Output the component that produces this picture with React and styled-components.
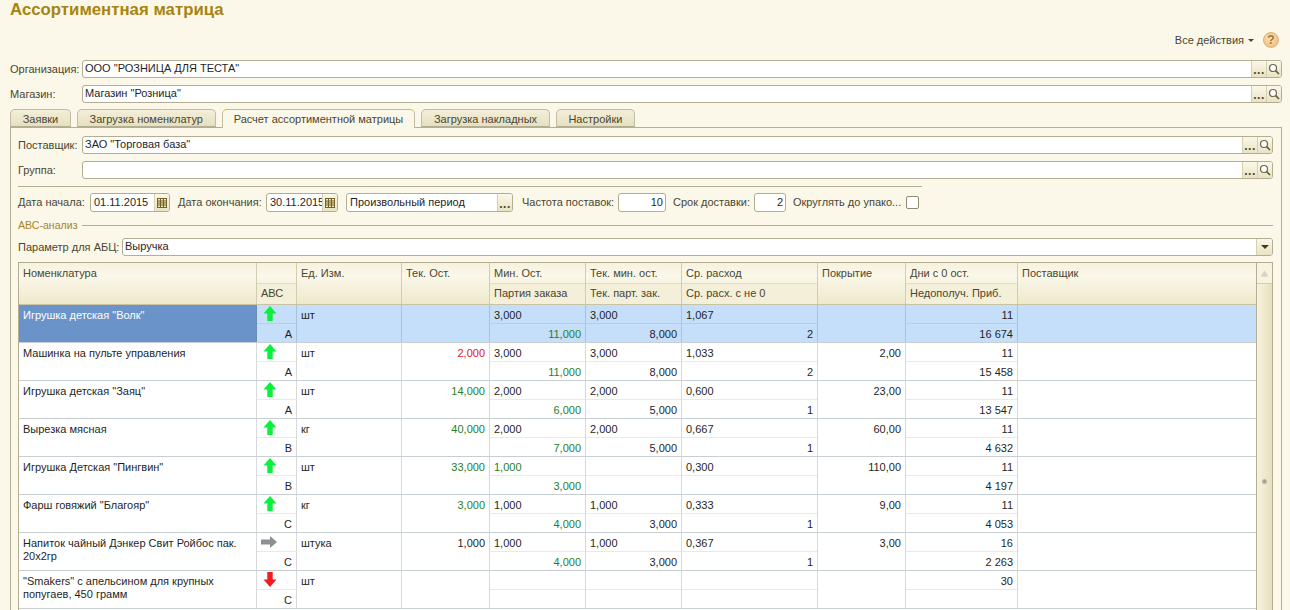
import React from 'react'
import styled, { createGlobalStyle } from 'styled-components'

const columns = '238px 40px 105px 88px 96px 96px 136px 88px 112px 1fr'

const rows = [
  { name: 'Игрушка детская "Волк"', trend: 'up', abc: 'A', unit: 'шт', stock: '', min: '3,000', batch: '11,000', curMin: '3,000', curBatch: '8,000', avg: '1,067', avgNz: '2', cover: '', days: '11', lost: '16 674', selected: true },
  { name: 'Машинка на пульте управления', trend: 'up', abc: 'A', unit: 'шт', stock: '2,000', stockTone: 'red', min: '3,000', batch: '11,000', curMin: '3,000', curBatch: '8,000', avg: '1,033', avgNz: '2', cover: '2,00', days: '11', lost: '15 458' },
  { name: 'Игрушка детская "Заяц"', trend: 'up', abc: 'A', unit: 'шт', stock: '14,000', stockTone: 'green', min: '2,000', batch: '6,000', curMin: '2,000', curBatch: '5,000', avg: '0,600', avgNz: '1', cover: '23,00', days: '11', lost: '13 547' },
  { name: 'Вырезка мясная', trend: 'up', abc: 'B', unit: 'кг', stock: '40,000', stockTone: 'green', min: '2,000', batch: '7,000', curMin: '2,000', curBatch: '5,000', avg: '0,667', avgNz: '1', cover: '60,00', days: '11', lost: '4 632' },
  { name: 'Игрушка Детская "Пингвин"', trend: 'up', abc: 'B', unit: 'шт', stock: '33,000', stockTone: 'green', min: '1,000', minTone: 'green', batch: '3,000', curMin: '', curBatch: '', avg: '0,300', avgNz: '', cover: '110,00', days: '11', lost: '4 197' },
  { name: 'Фарш говяжий "Благояр"', trend: 'up', abc: 'C', unit: 'кг', stock: '3,000', stockTone: 'green', min: '1,000', batch: '4,000', curMin: '1,000', curBatch: '3,000', avg: '0,333', avgNz: '1', cover: '9,00', days: '11', lost: '4 053' },
  { name: 'Напиток чайный Дэнкер Свит Ройбос пак. 20х2гр', trend: 'flat', abc: 'C', unit: 'штука', stock: '1,000', min: '1,000', batch: '4,000', curMin: '1,000', curBatch: '3,000', avg: '0,367', avgNz: '1', cover: '3,00', days: '16', lost: '2 263' },
  { name: '"Smakers" с апельсином для крупных попугаев, 450 грамм', trend: 'down', abc: 'C', unit: 'шт', stock: '', min: '', batch: '', curMin: '', curBatch: '', avg: '', avgNz: '', cover: '', days: '30', lost: '' },
]

const toneColor = { red: '#e0181c', green: '#1f8028' }

export default function App() {
  return (
    <Page>
      <GlobalStyle />
      <Title>Ассортиментная матрица</Title>
      <Actions>
        <span>Все действия</span>
        <Caret />
        <HelpButton>?</HelpButton>
      </Actions>

      <FormRow>
        <Label $w={72}>Организация:</Label>
        <RefField value='ООО "РОЗНИЦА ДЛЯ ТЕСТА"' />
      </FormRow>
      <FormRow>
        <Label $w={72}>Магазин:</Label>
        <RefField value='Магазин "Розница"' />
      </FormRow>

      <Tabs>
        <Tab>Заявки</Tab>
        <Tab>Загрузка номенклатур</Tab>
        <Tab $active>Расчет ассортиментной матрицы</Tab>
        <Tab>Загрузка накладных</Tab>
        <Tab>Настройки</Tab>
      </Tabs>

      <Panel>
        <FormRow $inner>
          <Label $w={64}>Поставщик:</Label>
          <RefField value='ЗАО "Торговая база"' />
        </FormRow>
        <FormRow $inner>
          <Label $w={64}>Группа:</Label>
          <RefField value='' />
        </FormRow>
        <Divider />
        <FilterRow>
          <Label $w={72}>Дата начала:</Label>
          <DateField value='01.11.2015' width={80} />
          <Label $w={88} $ml={8}>Дата окончания:</Label>
          <DateField value='30.11.2015' width={72} />
          <DateBox $w={167} $ml={8}>
            <DateInput>Произвольный период</DateInput>
            <SideButton>...</SideButton>
          </DateBox>
          <Label $w={96} $ml={9}>Частота поставок:</Label>
          <NumberField $w={48}>10</NumberField>
          <Label $w={81} $ml={7}>Срок доставки:</Label>
          <NumberField $w={32}>2</NumberField>
          <Label $w={113} $ml={7}>Округлять до упако...</Label>
          <CheckBox />
        </FilterRow>
        <GroupTitle>
          <span>АВС-анализ</span>
          <GroupLine />
        </GroupTitle>
        <FormRow $inner $tight>
          <Label $w={104}>Параметр для АБЦ:</Label>
          <Field>
            <Input>Выручка</Input>
            <DropButton><DropCaret /></DropButton>
          </Field>
        </FormRow>

        <TableFrame>
          <TableBody>
            <HeadRow>
              <HeadCell>Номенклатура</HeadCell>
              <HeadStack><HeadTop /><HeadBottom>АВС</HeadBottom></HeadStack>
              <HeadCell>Ед. Изм.</HeadCell>
              <HeadCell>Тек. Ост.</HeadCell>
              <HeadStack><HeadTop>Мин. Ост.</HeadTop><HeadBottom>Партия заказа</HeadBottom></HeadStack>
              <HeadStack><HeadTop>Тек. мин. ост.</HeadTop><HeadBottom>Тек. парт. зак.</HeadBottom></HeadStack>
              <HeadStack><HeadTop>Ср. расход</HeadTop><HeadBottom>Ср. расх. с не 0</HeadBottom></HeadStack>
              <HeadCell>Покрытие</HeadCell>
              <HeadStack><HeadTop>Дни с 0 ост.</HeadTop><HeadBottom>Недополуч. Приб.</HeadBottom></HeadStack>
              <HeadCell>Поставщик</HeadCell>
            </HeadRow>
            {rows.map((row) => (
              <DataRow key={row.name} $selected={row.selected}>
                <NameCell $selected={row.selected}>{row.name}</NameCell>
                <Stack>
                  <Sub $selected={row.selected}><TrendArrow trend={row.trend} /></Sub>
                  <Sub $right>{row.abc}</Sub>
                </Stack>
                <Cell>{row.unit}</Cell>
                <Cell $right $tone={row.stockTone}>{row.stock}</Cell>
                <Stack>
                  <Sub $selected={row.selected} $tone={row.minTone}>{row.min}</Sub>
                  <Sub $right $tone='green'>{row.batch}</Sub>
                </Stack>
                <Stack>
                  <Sub $selected={row.selected}>{row.curMin}</Sub>
                  <Sub $right>{row.curBatch}</Sub>
                </Stack>
                <Stack>
                  <Sub $selected={row.selected}>{row.avg}</Sub>
                  <Sub $right>{row.avgNz}</Sub>
                </Stack>
                <Cell $right>{row.cover}</Cell>
                <Stack>
                  <Sub $selected={row.selected} $right>{row.days}</Sub>
                  <Sub $right>{row.lost}</Sub>
                </Stack>
                <Cell />
              </DataRow>
            ))}
          </TableBody>
          <Scrollbar>
            <ScrollButton>
              <svg width='9' height='7' viewBox='0 0 9 7'><path d='M4.5 0.5 L8.5 6.5 H0.5 Z' fill='#d5d2bf' /></svg>
            </ScrollButton>
            <ScrollTrack>
              <ScrollGrip />
            </ScrollTrack>
          </Scrollbar>
        </TableFrame>
      </Panel>
    </Page>
  )
}

function RefField({ value }) {
  return (
    <Field>
      <Input>{value}</Input>
      <SideButton>...</SideButton>
      <IconButton>
        <SearchIcon />
      </IconButton>
    </Field>
  )
}

function DateField({ value, width }) {
  return (
    <DateBox $w={width}>
      <DateInput>{value}</DateInput>
      <IconButton>
        <svg width='10' height='10' viewBox='0 0 10 10'>
          <rect x='0.5' y='0.5' width='9' height='9' fill='#f4e7b8' stroke='#75622a' />
          <path d='M0.5 3H9.5M0.5 5H9.5M0.5 7H9.5M3.5 0.5V9.5M6.5 0.5V9.5' stroke='#75622a' fill='none' />
        </svg>
      </IconButton>
    </DateBox>
  )
}

function SearchIcon() {
  return (
    <svg width='12' height='12' viewBox='0 0 12 12'>
      <circle cx='5' cy='5' r='3.5' fill='#fff' stroke='#66664f' strokeWidth='1.2' />
      <path d='M7.6 7.6 L11 11' stroke='#66603c' strokeWidth='1.7' />
    </svg>
  )
}

function TrendArrow({ trend }) {
  if (trend === 'flat') {
    return (
      <FlatArrow viewBox='0 0 16 12' width='16' height='12'>
        <path d='M0 3.5H9V0L16 6L9 12V8.5H0Z' fill='#8f8f8f' />
      </FlatArrow>
    )
  }
  const fill = trend === 'up' ? '#0bf03c' : '#f01c24'
  const d = trend === 'up' ? 'M7 0L13.5 7.5H9.7V15H4.3V7.5H0.5Z' : 'M7 15L13.5 7.5H9.7V0H4.3V7.5H0.5Z'
  return (
    <ArrowSvg viewBox='0 0 14 15' width='14' height='15'>
      <path d={d} fill={fill} />
    </ArrowSvg>
  )
}

const GlobalStyle = createGlobalStyle`
  html, body {
    margin: 0;
    padding: 0;
    background: #fbf8e9;
  }
  * {
    box-sizing: border-box;
  }
`

const Page = styled.div`
  width: 1290px;
  height: 610px;
  overflow: hidden;
  background: #fbf8e9;
  color: #4a4630;
  font-family: "Liberation Sans", Arial, sans-serif;
  font-size: 11px;
  line-height: 13px;
`

const Title = styled.div`
  height: 26px;
  padding: 0 0 0 10px;
  font-size: 16.8px;
  line-height: 19px;
  font-weight: bold;
  color: #a8840f;
`

const Actions = styled.div`
  height: 28px;
  margin-bottom: 6px;
  display: flex;
  align-items: center;
  justify-content: flex-end;
  padding-right: 11px;
`

const Caret = styled.span`
  width: 0;
  height: 0;
  margin: 0 9px 0 4px;
  border-left: 3px solid transparent;
  border-right: 3px solid transparent;
  border-top: 3px solid #4a4630;
`

const HelpButton = styled.span`
  width: 16px;
  height: 16px;
  border-radius: 50%;
  background: radial-gradient(circle at 45% 40%, #fbe2bb, #eeb56c);
  border: 1px solid #d9b27e;
  color: #a5763a;
  font-size: 12px;
  font-weight: bold;
  line-height: 14px;
  text-align: center;
`

const FormRow = styled.div`
  display: flex;
  align-items: center;
  height: 18px;
  margin: ${(p) => (p.$inner ? '0 8px 7px 7px' : '0 8px 7px 10px')};
  margin-bottom: ${(p) => (p.$tight ? '6px' : '7px')};
`

const Label = styled.span`
  flex: none;
  width: ${(p) => p.$w}px;
  margin-left: ${(p) => p.$ml || 0}px;
  white-space: nowrap;
`

const Field = styled.div`
  flex: 1;
  display: flex;
  height: 18px;
  min-width: 0;
  background: #fff;
  border: 1px solid #b3ad91;
  border-radius: 3px;
  overflow: hidden;
`

const Input = styled.div`
  flex: 1;
  min-width: 0;
  padding: 1px 0 0 2px;
  color: #1f1f1f;
  white-space: nowrap;
  overflow: hidden;
`

const SideButton = styled.div`
  flex: none;
  width: 15px;
  display: flex;
  align-items: flex-end;
  justify-content: center;
  padding-bottom: 3px;
  background: linear-gradient(#fbf8e8, #e9e2c4);
  border-left: 1px solid #d5cfb3;
  font-size: 12px;
  font-weight: bold;
  line-height: 7px;
  letter-spacing: 0.5px;
`

const IconButton = styled(SideButton)`
  align-items: center;
  padding-bottom: 0;
`

const Tabs = styled.div`
  display: flex;
  align-items: flex-end;
  height: 18px;
  margin: -1px 0 0 10px;
  gap: 6px;
  position: relative;
  z-index: 1;
`

const Tab = styled.div`
  height: ${(p) => (p.$active ? '19px' : '18px')};
  margin-bottom: ${(p) => (p.$active ? '-1px' : '0')};
  padding: 3px ${(p) => (p.$active ? '11px' : '11.7px')} 0;
  border: 1px solid #c3bda0;
  border-bottom: ${(p) => (p.$active ? 'none' : '1px solid #b3ad91')};
  border-top-color: ${(p) => (p.$active ? '#e3b64a' : '#c3bda0')};
  border-radius: 5px 5px 0 0;
  background: ${(p) => (p.$active ? '#fbf8e9' : 'linear-gradient(#f3eed8, #e6e0c2)')};
  white-space: nowrap;
`

const Panel = styled.div`
  margin: 0 8px 0 10px;
  height: 600px;
  padding-top: 8px;
  border: 1px solid #b3ad91;
`

const Divider = styled.div`
  width: 904px;
  height: 1px;
  margin: 0 0 6px 7px;
  background: #b3ad91;
`

const FilterRow = styled.div`
  display: flex;
  align-items: center;
  height: 19px;
  margin: 0 0 6px 7px;
`

const DateBox = styled.div`
  flex: none;
  width: ${(p) => p.$w}px;
  margin-left: ${(p) => p.$ml || 0}px;
  height: 19px;
  display: flex;
  background: #fff;
  border: 1px solid #b3ad91;
  border-radius: 3px;
  overflow: hidden;
`

const DateInput = styled.div`
  flex: 1;
  min-width: 0;
  padding: 2px 0 0 3px;
  color: #1f1f1f;
  white-space: nowrap;
  overflow: hidden;
`

const NumberField = styled.div`
  flex: none;
  width: ${(p) => p.$w}px;
  height: 19px;
  padding: 2px 2px 0 0;
  text-align: right;
  background: #fff;
  border: 1px solid #b3ad91;
  border-radius: 3px;
  color: #1f1f1f;
`

const CheckBox = styled.span`
  flex: none;
  width: 13px;
  height: 13px;
  background: #fff;
  border: 1px solid #8f8a70;
  border-radius: 2px;
`

const GroupTitle = styled.div`
  display: flex;
  align-items: center;
  height: 14px;
  margin: 0 8px 6px 7px;
  color: #a8842a;
  font-size: 10.6px;
`

const GroupLine = styled.span`
  flex: 1;
  height: 1px;
  margin-left: 4px;
  background: #b3ad91;
`

const DropButton = styled.div`
  flex: none;
  width: 16px;
  display: flex;
  align-items: center;
  justify-content: center;
  background: linear-gradient(#fbf8e8, #e9e2c4);
  border-left: 1px solid #d5cfb3;
`

const DropCaret = styled.span`
  width: 0;
  height: 0;
  border-left: 4px solid transparent;
  border-right: 4px solid transparent;
  border-top: 4px solid #4a3c10;
`

const TableFrame = styled.div`
  display: flex;
  margin: 0 8px 0 7px;
  height: 417px;
  border: 1px solid #b3ad91;
  border-bottom: none;
  background: #fff;
`

const TableBody = styled.div`
  flex: 1;
  min-width: 0;
`

const HeadRow = styled.div`
  display: grid;
  grid-template-columns: ${columns};
  height: 42px;
  background: linear-gradient(#f7f2dc, #fbf8ea 30%, #efe8cb);
  border-bottom: 1px solid #c9c3a4;
`

const HeadCell = styled.div`
  padding: 4px;
  border-right: 1px solid #d3cdb0;
  white-space: nowrap;
  &:last-child {
    border-right: none;
  }
`

const HeadStack = styled.div`
  display: flex;
  flex-direction: column;
  border-right: 1px solid #d3cdb0;
  white-space: nowrap;
`

const HeadTop = styled.div`
  height: 21px;
  padding: 4px 4px 0;
  border-bottom: 1px solid #e3ddc2;
`

const HeadBottom = styled.div`
  height: 20px;
  padding: 3px 4px 0;
  background: #f4efd8;
`

const DataRow = styled.div`
  display: grid;
  grid-template-columns: ${columns};
  height: 38px;
  background: ${(p) => (p.$selected ? '#c5def9' : '#fff')};
  border-bottom: 1px solid #c8cfd4;
`

const Cell = styled.div`
  padding: 4px 4px 0;
  text-align: ${(p) => (p.$right ? 'right' : 'left')};
  color: ${(p) => toneColor[p.$tone] || '#1f1f1f'};
  border-right: 1px solid rgba(110, 120, 125, 0.28);
  &:last-child {
    border-right: none;
  }
`

const NameCell = styled(Cell)`
  background: ${(p) => (p.$selected ? '#6a94c9' : 'transparent')};
  color: ${(p) => (p.$selected ? '#fff' : '#1f1f1f')};
`

const Stack = styled.div`
  display: flex;
  flex-direction: column;
  border-right: 1px solid rgba(110, 120, 125, 0.28);
`

const Sub = styled.div`
  flex: 1;
  padding: 4px 4px 0;
  text-align: ${(p) => (p.$right ? 'right' : 'left')};
  color: ${(p) => toneColor[p.$tone] || '#1f1f1f'};
  &:first-child {
    border-bottom: 1px solid ${(p) => (p.$selected ? '#b4cfec' : '#e8e9e9')};
  }
`

const ArrowSvg = styled.svg`
  display: block;
  margin: -3px 0 0 2px;
`

const FlatArrow = styled.svg`
  display: block;
  margin: -1px 0 0 0;
`

const Scrollbar = styled.div`
  flex: none;
  width: 16px;
  display: flex;
  flex-direction: column;
  border-left: 1px solid #b3ad96;
`

const ScrollButton = styled.div`
  height: 21px;
  display: flex;
  align-items: center;
  justify-content: center;
  background: #f7f3df;
  border-bottom: 1px solid #d3cdb0;
`

const ScrollTrack = styled.div`
  flex: 1;
  display: flex;
  align-items: center;
  justify-content: center;
  background: linear-gradient(90deg, #f7f3df, #e7dfbd);
`

const ScrollGrip = styled.span`
  width: 5px;
  height: 5px;
  border-radius: 50%;
  background: radial-gradient(circle, #98968a, #c9c6b2);
`
